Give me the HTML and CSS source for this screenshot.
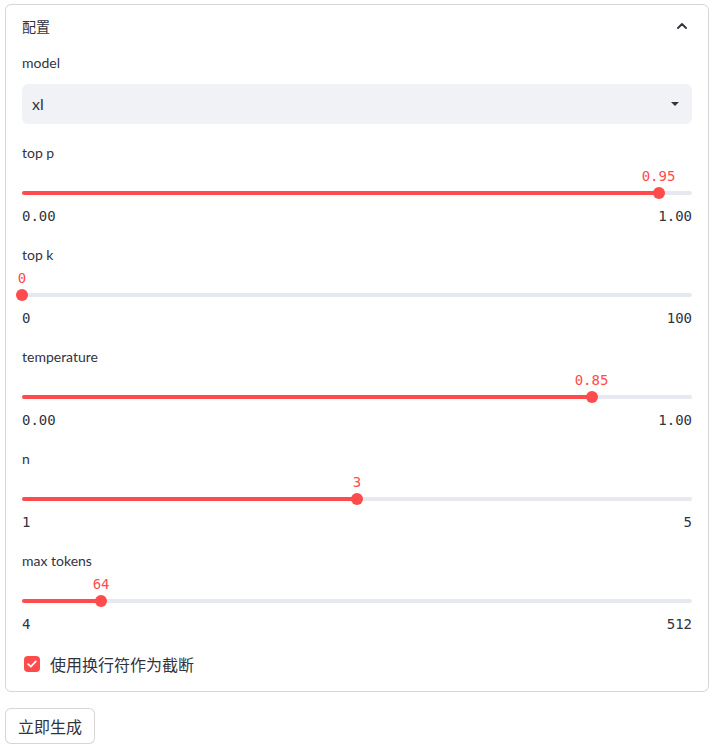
FILE: index.html
```html
<!DOCTYPE html>
<html lang="zh">
<head>
<meta charset="utf-8">
<title>配置</title>
<link rel="stylesheet" href="styles.css">
</head>
<body>
<div class="page">
  <div class="expander">
    <div class="exp-header">
      <span class="exp-title">配置</span>
      <svg class="chevron" width="10" height="6" viewBox="0 0 10 6"><path d="M1 5 L5 1 L9 5" fill="none" stroke="#31333f" stroke-width="1.8" stroke-linecap="round" stroke-linejoin="round"/></svg>
    </div>
    <div class="exp-body">
      <div class="field">
        <div class="label">model</div>
        <div class="select">
          <span class="select-value">xl</span>
          <svg class="caret" width="8" height="4" viewBox="0 0 8 4"><path d="M0 0 L8 0 L4 4 Z" fill="#31333f"/></svg>
        </div>
      </div>

      <div class="slider-block">
        <div class="label">top p</div>
        <div class="value-row"><span class="value" style="left:95%">0.95</span></div>
        <div class="track-row">
          <div class="track"><div class="fill" style="width:95%"></div></div>
          <div class="thumb" style="left:95%"></div>
        </div>
        <div class="ticks"><span>0.00</span><span>1.00</span></div>
      </div>

      <div class="slider-block">
        <div class="label">top k</div>
        <div class="value-row"><span class="value" style="left:0%">0</span></div>
        <div class="track-row">
          <div class="track"><div class="fill" style="width:0%"></div></div>
          <div class="thumb" style="left:0%"></div>
        </div>
        <div class="ticks"><span>0</span><span>100</span></div>
      </div>

      <div class="slider-block">
        <div class="label">temperature</div>
        <div class="value-row"><span class="value" style="left:85%">0.85</span></div>
        <div class="track-row">
          <div class="track"><div class="fill" style="width:85%"></div></div>
          <div class="thumb" style="left:85%"></div>
        </div>
        <div class="ticks"><span>0.00</span><span>1.00</span></div>
      </div>

      <div class="slider-block">
        <div class="label">n</div>
        <div class="value-row"><span class="value" style="left:50%">3</span></div>
        <div class="track-row">
          <div class="track"><div class="fill" style="width:50%"></div></div>
          <div class="thumb" style="left:50%"></div>
        </div>
        <div class="ticks"><span>1</span><span>5</span></div>
      </div>

      <div class="slider-block last">
        <div class="label">max tokens</div>
        <div class="value-row"><span class="value" style="left:11.81%">64</span></div>
        <div class="track-row">
          <div class="track"><div class="fill" style="width:11.81%"></div></div>
          <div class="thumb" style="left:11.81%"></div>
        </div>
        <div class="ticks"><span>4</span><span>512</span></div>
      </div>

      <label class="checkbox">
        <span class="box"><svg width="10" height="8" viewBox="0 0 10 8"><path d="M1.2 4.2 L3.8 6.6 L8.8 1.4" fill="none" stroke="#fff" stroke-width="1.8" stroke-linecap="round" stroke-linejoin="round"/></svg></span>
        <span class="check-text">使用换行符作为截断</span>
      </label>
    </div>
  </div>
  <button class="btn">立即生成</button>
</div>
</body>
</html>
```
FILE: styles.css
```css
* { box-sizing: border-box; }
html, body { margin: 0; padding: 0; background: #fff; }
body {
  font-family: "Lato", "Noto Sans CJK SC", sans-serif;
  color: #31333f;
}
.page {
  padding: 4px 7px 0 5px;
}
.expander {
  border: 1px solid rgba(49, 51, 63, 0.2);
  border-radius: 6px;
}
.exp-header {
  display: flex;
  align-items: center;
  justify-content: space-between;
  padding: 11px 16px 17px 16px;
  height: 48px;
}
.exp-title {
  font-size: 14px;
  line-height: 20px;
  font-family: "Noto Sans CJK SC", sans-serif;
}
.chevron { margin-right: 5px; display: block; }
.exp-body {
  padding: 0 16px 15px 16px;
}
.label {
  font-size: 14px;
  line-height: 20px;
  height: 20px;
}
.field .label { margin-bottom: 11px; }
.select {
  height: 40px;
  background: #f0f2f6;
  border-radius: 6px;
  display: flex;
  align-items: center;
  justify-content: space-between;
  padding: 0 13px 0 10px;
  margin-bottom: 19px;
}
.select-value { font-size: 16px; line-height: 20px; }
.caret { display: block; }
.slider-block { margin-bottom: 19px; }
.slider-block.last { margin-bottom: 18px; }
.value-row {
  position: relative;
  height: 20px;
  margin-top: 3px;
}
.value {
  position: absolute;
  top: 0;
  transform: translateX(-50%);
  font-family: "DejaVu Sans Mono", monospace;
  font-size: 14px;
  line-height: 20px;
  color: #ff4b4b;
  white-space: nowrap;
}
.track-row {
  position: relative;
  height: 12px;
  margin-top: 1px;
  display: flex;
  align-items: center;
}
.track {
  width: 100%;
  height: 4px;
  border-radius: 2px;
  background: #e6e9ef;
  overflow: hidden;
}
.fill {
  height: 100%;
  background: #ff4b4b;
}
.thumb {
  position: absolute;
  top: 0;
  width: 12px;
  height: 12px;
  margin-left: -6px;
  border-radius: 50%;
  background: #ff4b4b;
}
.ticks {
  display: flex;
  justify-content: space-between;
  margin-top: 7px;
  font-family: "DejaVu Sans Mono", monospace;
  font-size: 14px;
  line-height: 20px;
  color: #31333f;
}
.checkbox {
  display: flex;
  align-items: center;
  height: 24px;
}
.box {
  width: 16px;
  height: 16px;
  margin-left: 2px;
  border-radius: 4px;
  background: #ff4b4b;
  display: flex;
  align-items: center;
  justify-content: center;
}
.box svg { display: block; }
.check-text {
  margin-left: 10px;
  font-size: 16px;
  line-height: 24px;
  font-family: "Noto Sans CJK SC", sans-serif;
}
.btn {
  margin-top: 16px;
  height: 36px;
  padding: 0 12px;
  border: 1px solid rgba(49, 51, 63, 0.2);
  border-radius: 6px;
  background: #fff;
  color: #31333f;
  font-family: "Noto Sans CJK SC", sans-serif;
  font-size: 16px;
  line-height: 24px;
}
```
